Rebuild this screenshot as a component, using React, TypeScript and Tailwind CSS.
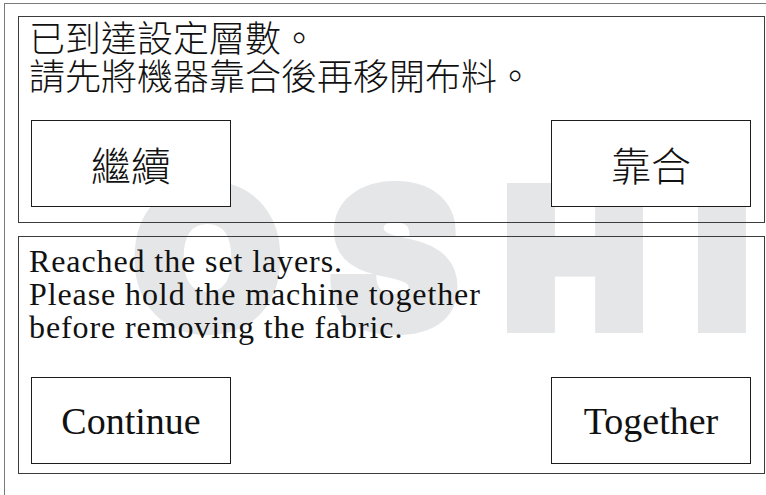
import React from "react";

const cjk = { fontFamily: '"Noto Sans CJK TC", "Noto Sans CJK SC", sans-serif' };
const serif = { fontFamily: '"Liberation Serif", "Times New Roman", serif' };

function Btn({ children }: { children: React.ReactNode }) {
  return (
    <div className="w-[200px] h-[87px] bg-white border border-[#1c1c1c] flex items-center justify-center text-[#111]">
      {children}
    </div>
  );
}

export default function App() {
  return (
    <div className="relative w-[766px] h-[495px] bg-white overflow-hidden">
      {/* watermark */}
      <div
        className="absolute inset-0 pointer-events-none select-none text-[#e5e6e8] font-black leading-none text-[192px] [-webkit-text-stroke:10px_#e5e6e8]"
        style={{ fontFamily: 'Inter, "Open Sans", sans-serif' }}
      >
        <span className="absolute left-[133px] top-[162px]">O</span>
        <span className="absolute left-[330px] top-[162px]">S</span>
        <span className="absolute left-[503px] top-[162px]">H</span>
        <span className="absolute left-[694px] top-[162px]">I</span>
      </div>

      <div className="relative ml-[4px] mt-[3px] w-[800px] h-[520px] border-l border-t border-[#7a7a7a] pl-[13px] pt-[12px]">
        {/* panel 1 */}
        <div className="w-[747px] h-[207px] border border-[#3c3c3c] pl-[10px]">
          <div className="text-[36px] leading-[38px] font-light text-[#111]" style={cjk}>
            <div>已到達設定層數。</div>
            <div>請先將機器靠合後再移開布料。</div>
          </div>
          <div className="mt-[27px] pl-[2px] pr-[13px] flex justify-between text-[40px] leading-none font-light" style={cjk}>
            <Btn>繼續</Btn>
            <Btn>靠合</Btn>
          </div>
        </div>

        {/* panel 2 */}
        <div className="mt-[13px] w-[747px] h-[238px] border border-[#3c3c3c] pl-[10px] pt-[8px]">
          <div className="text-[32px] leading-[33px] tracking-[0.9px] text-[#111]" style={serif}>
            <div>Reached the set layers.</div>
            <div>Please hold the machine together</div>
            <div>before removing the fabric.</div>
          </div>
          <div className="mt-[33px] pl-[2px] pr-[13px] flex justify-between text-[38px] leading-none" style={serif}>
            <Btn>Continue</Btn>
            <Btn>Together</Btn>
          </div>
        </div>
      </div>
    </div>
  );
}
